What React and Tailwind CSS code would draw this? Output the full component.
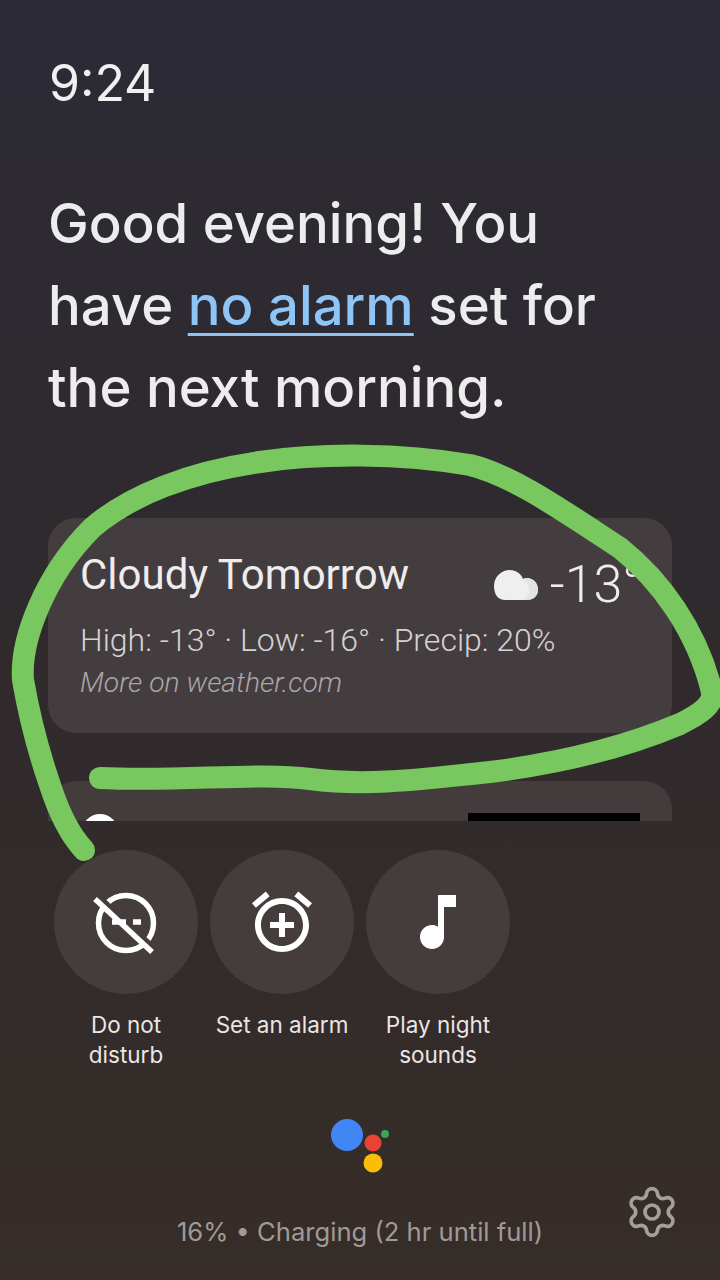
import React from 'react';
import { Settings } from 'lucide-react';

const HEAD = "font-['Inter',sans-serif]";

function CircleAction({ label, children }) {
  return (
    <div className="flex w-[144px] flex-col items-center">
      <div className="flex h-[144px] w-[144px] items-center justify-center rounded-full bg-[#453d3c]">
        {children}
      </div>
      <div className={`mt-[16px] w-[156px] -mx-[6px] text-center text-[22.5px] leading-[30px] text-[#e9e6e4] ${HEAD}`}>
        {label}
      </div>
    </div>
  );
}

export default function App() {
  return (
    <div className="relative h-[1280px] w-[720px] overflow-hidden bg-gradient-to-b from-[#2c2a35] via-[#302a2d] to-[#362d28]">
      {/* Clipped upper part */}
      <div className="h-[821px] overflow-hidden">
        <div className={`pl-[49px] pt-[51px] text-[50px] leading-[64px] text-[#f1f0f1] ${HEAD}`}>9:24</div>

        <h1 className={`pl-[48px] pt-[67px] text-[54.5px] font-medium leading-[82px] text-[#eeedee] ${HEAD}`}>
          Good evening! You
          <br />
          have <span className="text-[#8ec5f6] underline decoration-[3px] underline-offset-[8px]">no alarm</span> set for
          <br />
          the next morning.
        </h1>

        <div className="mx-[48px] mt-[90px] h-[215px] rounded-[28px] bg-[#443d40] px-[32px] pt-[32px]">
          <div className="flex items-start justify-between">
            <div className={`text-[42px] leading-[50px] text-[#eeeced] font-['Roboto',sans-serif]`}>Cloudy Tomorrow</div>
            <div className="-mr-[2px] flex items-center pt-[6px]">
              <svg width="46" height="32" viewBox="0 0 46 32">
                <path d="M17 1c6 0 11 3.500 13 9 1-.5 2.500-1 4-1 6 0 11 5 11 11.500S40 31 34 31H12C5.500 31 1 26 1 17 1 8 8 1 17 1z" fill="#efefef" />
                <path d="M30 10c1-.5 2.500-1 4-1 6 0 11 5 11 11.500S40 31 34 31h-4c5-3 7-7 6-12-.5-4-3-7-6-9z" fill="#e2e4e2" />
              </svg>
              <span className="ml-[11px] text-[52px] leading-[58px] font-light text-[#eeeced] font-['Roboto',sans-serif]">-13°</span>
            </div>
          </div>
          <div className="mt-[6px] text-[32px] leading-[40px] font-light text-[#d5d2d3] font-['Roboto',sans-serif]">
            High: -13° · Low: -16° · Precip: 20%
          </div>
          <div className="mt-[5px] text-[28.3px] leading-[36px] font-light italic text-[#aaa6a8] font-['Roboto',sans-serif]">
            More on weather.com
          </div>
        </div>

        <div className="mx-[48px] mt-[48px] flex h-[80px] justify-between rounded-[28px] bg-[#443c3c] pl-[34px] pr-[32px] pt-[32px]">
          <div className="mt-[1px] h-[36px] w-[36px] rounded-full bg-white" />
          <div className="h-[40px] w-[172px] bg-black" />
        </div>
      </div>

      {/* Quick actions */}
      <div className="flex items-start gap-[12px] pl-[54px] pt-[29px]">
        <CircleAction label={<>Do not<br />disturb</>}>
          <svg width="72" height="72" viewBox="0 0 72 72" fill="none" stroke="#fff" strokeWidth="5.500">
            <circle cx="36" cy="37" r="27.500" />
            <path d="M7.700 10.300l57 53" stroke="#453d3c" strokeWidth="6.500" />
            <path d="M5 13l57 53" />
            <path d="M22 36h14M43 36h8" />
          </svg>
        </CircleAction>
        <CircleAction label="Set an alarm">
          <svg width="72" height="72" viewBox="0 0 24 24" fill="#fff">
            <path d="M7.880 3.390L6.600 1.860 2 5.710l1.290 1.530 4.590-3.850zM22 5.720l-4.600-3.860-1.290 1.530 4.600 3.860L22 5.720zM12 4c-4.970 0-9 4.030-9 9s4.020 9 9 9c4.970 0 9-4.030 9-9s-4.030-9-9-9zm0 16c-3.860 0-7-3.140-7-7s3.140-7 7-7 7 3.140 7 7-3.140 7-7 7zm1-11h-2v3H8v2h3v3h2v-3h3v-2h-3V9z" />
          </svg>
        </CircleAction>
        <CircleAction label={<>Play night<br />sounds</>}>
          <svg width="72" height="72" viewBox="0 0 24 24" fill="#fff">
            <path d="M12 3v10.550c-.590-.340-1.270-.550-2-.550-2.210 0-4 1.790-4 4s1.790 4 4 4 4-1.790 4-4V7h4V3h-6z" />
          </svg>
        </CircleAction>
      </div>

      {/* Assistant logo */}
      <div className="mt-[49px] flex justify-center pl-[2px]">
        <svg width="64" height="56" viewBox="0 0 64 56">
          <circle cx="18" cy="16" r="16" fill="#4285f4" />
          <circle cx="44" cy="24" r="8.500" fill="#ea4335" />
          <circle cx="56" cy="15" r="4" fill="#34a853" />
          <circle cx="44" cy="44" r="9.500" fill="#fbbc05" />
        </svg>
      </div>

      {/* Status line */}
      <div className={`mt-[39px] text-center text-[25.6px] leading-[36px] text-[#a09a97] ${HEAD}`}>
        16% • Charging (2 hr until full)
      </div>

      <Settings className="absolute left-[624px] top-[1184px] text-[#a39f9c]" size={56} strokeWidth={1.6} />

      {/* Hand-drawn annotation on top of the screenshot */}
      <svg className="absolute left-0 top-0" width="720" height="1280" viewBox="0 0 720 1280" fill="none">
        <path
          d="M84 850 C70 835 58 810 50 785 C42 762 30 720 23 680 C20 640 45 575 92 528 C130 495 190 472 260 462 C320 453 400 453 470 465 C512 475 562 510 620 548 C660 580 697 630 712 692 C714 705 700 714 680 724 C630 745 570 762 490 772 C430 778 370 787 310 779 C260 772 180 782 100 778"
          stroke="#78c85f"
          strokeWidth="22"
          strokeLinecap="round"
          strokeLinejoin="round"
        />
      </svg>
    </div>
  );
}
